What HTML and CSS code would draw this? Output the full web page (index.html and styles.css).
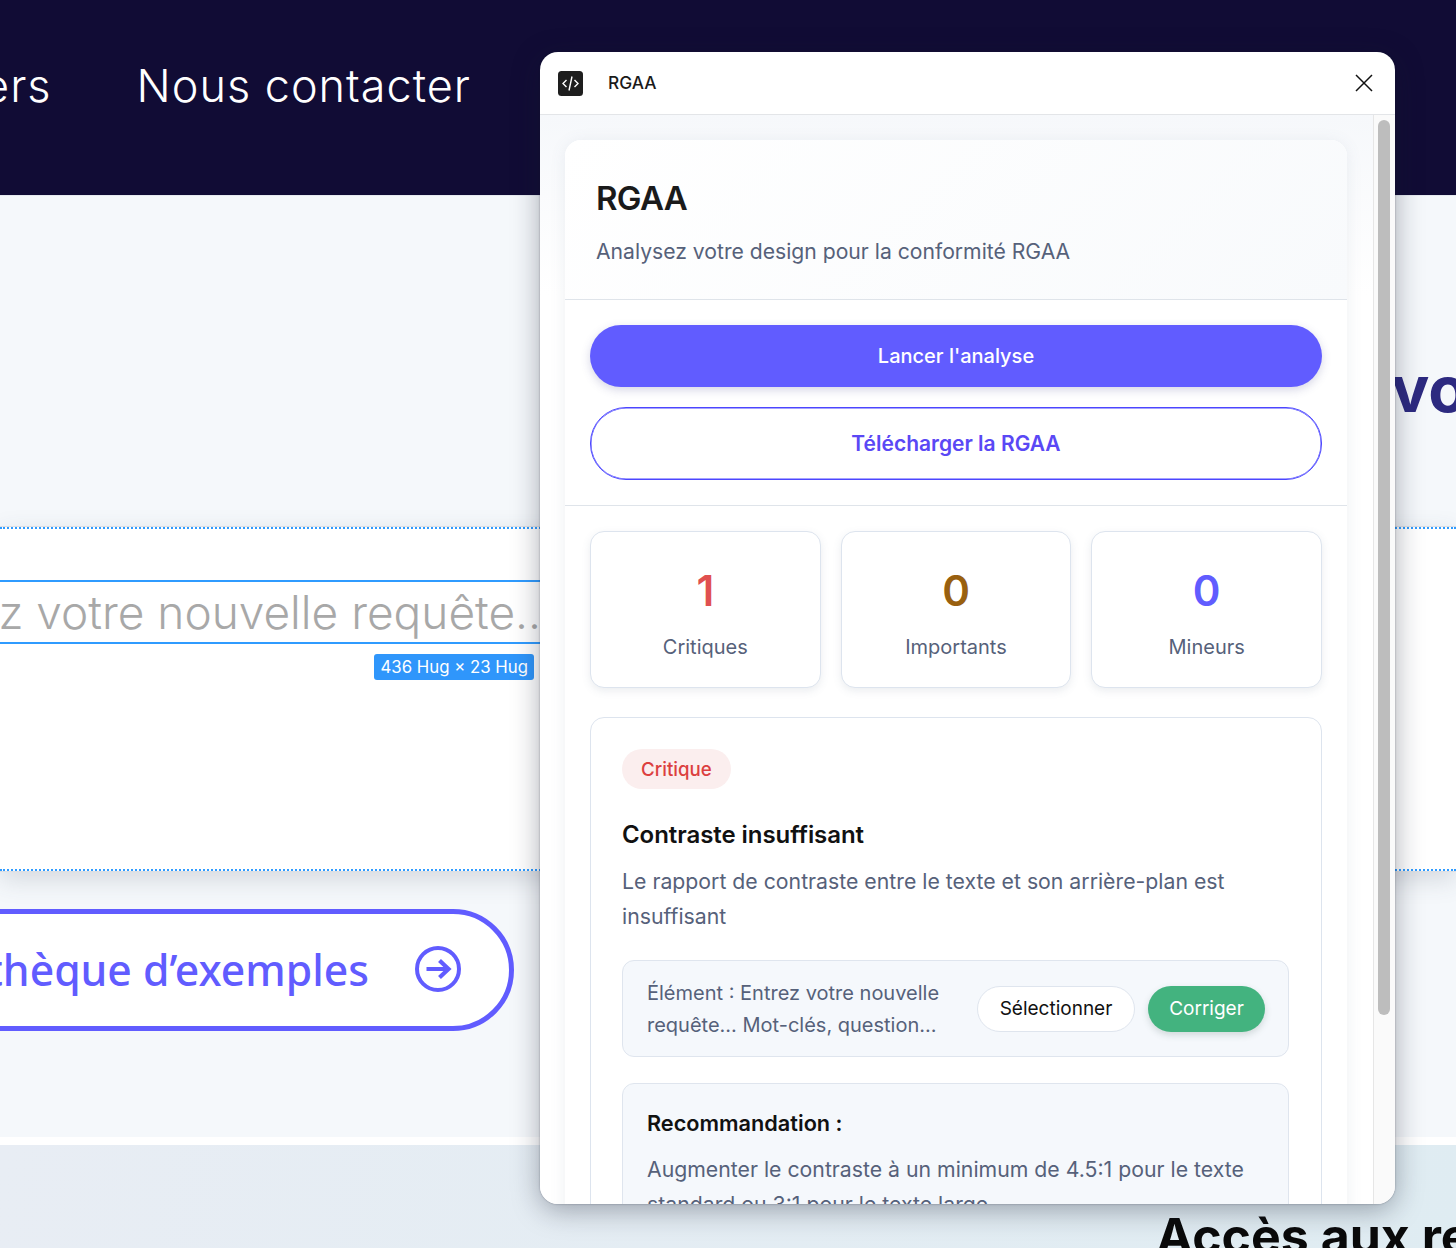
FILE: index.html
```html
<!DOCTYPE html>
<html lang="fr">
<head>
<meta charset="utf-8">
<title>RGAA</title>
<link rel="stylesheet" href="styles.css">
</head>
<body>
<div class="page">
  <header class="topbar">
    <span class="nav-link">ers</span>
    <span class="nav-link">Nous contacter</span>
  </header>
  <main class="hero">
    <h2 class="hero-title">vos</h2>
    <section class="prompt-band">
      <div class="prompt-frame"><span class="prompt-text">ez votre nouvelle requête...</span></div>
      <div class="size-row"><span class="size-tag">436 Hug × 23 Hug</span></div>
    </section>
    <div class="examples-row">
      <a class="examples-btn">
        <span>thèque d’exemples</span>
        <svg class="examples-icon" viewBox="0 0 46 46" fill="none" stroke="#615cff" stroke-width="4"><circle cx="23" cy="23" r="21"/><path d="M11.5 23H33M24.5 14.5 33.5 23l-9 8.500" stroke-width="4.200"/></svg>
      </a>
    </div>
  </main>
  <div class="strip"></div>
  <section class="resources"><h2 class="resources-title">Accès aux ressources</h2></section>

  <aside class="plugin">
    <div class="plugin-head">
      <span class="plugin-id">
        <svg class="plugin-logo" viewBox="0 0 25 25"><rect width="25" height="25" rx="3.500" fill="#1e1e1e"/><path d="M8.500 9 5 12.500 8.500 16M16.500 9 20 12.500 16.500 16M14 5.500 11 19.500" fill="none" stroke="#fff" stroke-width="1.400"/></svg>
        <span class="plugin-name">RGAA</span>
      </span>
      <svg class="plugin-close" viewBox="0 0 18 18" fill="none" stroke="#111" stroke-width="1.500"><path d="M1 1 17 17M17 1 1 17"/></svg>
    </div>
    <div class="plugin-main">
      <div class="plugin-scroll">
        <div class="sheet">
          <div class="sheet-head">
            <h1 class="sheet-title">RGAA</h1>
            <p class="sheet-sub">Analysez votre design pour la conformité RGAA</p>
          </div>
          <div class="actions">
            <button class="btn btn-primary">Lancer l'analyse</button>
            <button class="btn btn-outline">Télécharger la RGAA</button>
          </div>
          <div class="report">
            <div class="stats">
              <div class="stat"><span class="stat-num num-red">1</span><span class="stat-label">Critiques</span></div>
              <div class="stat"><span class="stat-num num-brown">0</span><span class="stat-label">Importants</span></div>
              <div class="stat"><span class="stat-num num-blue">0</span><span class="stat-label">Mineurs</span></div>
            </div>
            <article class="issue">
              <span class="badge">Critique</span>
              <h3 class="issue-title">Contraste insuffisant</h3>
              <p class="issue-text">Le rapport de contraste entre le texte et son arrière-plan est insuffisant</p>
              <div class="element">
                <p class="element-text">Élément : Entrez votre nouvelle requête... Mot-clés, question...</p>
                <button class="pill pill-select">Sélectionner</button>
                <button class="pill pill-fix">Corriger</button>
              </div>
              <div class="reco">
                <h4 class="reco-title">Recommandation :</h4>
                <p class="reco-text">Augmenter le contraste à un minimum de 4.5:1 pour le texte standard ou 3:1 pour le texte large</p>
              </div>
            </article>
          </div>
        </div>
      </div>
      <div class="scrolltrack"><div class="scrollthumb"></div></div>
    </div>
  </aside>
</div>
</body>
</html>
```
FILE: styles.css
```css
* { box-sizing: border-box; }
html, body { margin: 0; padding: 0; }
body { font-family: "Inter", "Liberation Sans", sans-serif; background: #f5f8fc; }
p, h1, h2, h3, h4 { margin: 0; }

.page {
  position: relative;
  width: 1456px;
  height: 1248px;
  overflow: hidden;
  display: flex;
  flex-direction: column;
}

.topbar {
  height: 196px;
  flex: none;
  background: #110c35;
  display: flex;
  justify-content: flex-end;
  align-items: flex-start;
  gap: 85px;
  padding: 58px 985px 0 0;
  border-bottom: 1px solid #e6eaf0;
}
.nav-link {
  color: #fff;
  font-family: "Inter", sans-serif;
  font-size: 45px;
  font-weight: 300;
  line-height: 56px;
  letter-spacing: 1px;
  white-space: nowrap;
}

.hero {
  height: 941px;
  flex: none;
  display: flex;
  flex-direction: column;
  background: #f5f8fb;
  overflow: hidden;
}
.hero-title {
  height: 331px;
  flex: none;
  padding: 155px 0 0 1391px;
  color: #2d2a80;
  font-size: 64px;
  font-weight: 700;
  line-height: 76px;
  white-space: nowrap;
}
.prompt-band {
  height: 344px;
  flex: none;
  background: #fff;
  border-top: 2px dotted #2f9bff;
  border-bottom: 2px dotted #2f9bff;
  box-shadow: 0 0 0 1px #dcdfe4, 0 8px 24px rgba(60, 70, 90, .18);
  padding-top: 51px;
}
.prompt-frame {
  width: 556px;
  height: 64px;
  border-top: 2px solid #2f9bff;
  border-bottom: 2px solid #2f9bff;
  display: flex;
  justify-content: flex-end;
  align-items: center;
}
.prompt-text {
  flex: none;
  margin-right: 2px;
  color: #a8a8a8;
  font-size: 46px;
  font-weight: 300;
  line-height: 60px;
  white-space: nowrap;
}
.size-row {
  display: flex;
  justify-content: flex-end;
  padding: 10px 922px 0 0;
}
.size-tag {
  background: #2f96fb;
  color: #fff;
  font-size: 16.800px;
  line-height: 26px;
  padding: 0 6px;
  border-radius: 3px;
  white-space: nowrap;
}
.examples-row {
  display: flex;
  justify-content: flex-end;
  padding: 38px 942px 0 0;
}
.examples-btn {
  display: flex;
  align-items: center;
  gap: 46px;
  width: 640px;
  flex: none;
  justify-content: flex-end;
  height: 122px;
  padding: 0 48px 2px 0;
  background: #fff;
  border: 5px solid #615cff;
  border-radius: 61px;
  color: #615cff;
  font-family: "Noto Sans", "Open Sans", sans-serif;
  font-size: 42.700px;
  font-weight: 500;
  white-space: nowrap;
}
.examples-icon { width: 46px; height: 46px; flex: none; }

.strip { height: 8px; flex: none; background: #fff; }
.resources {
  flex: 1;
  background: linear-gradient(100deg, #e8edf4, #dfecf2);
  padding: 63px 0 0 1156px;
  overflow: hidden;
}
.resources-title {
  color: #0a0a0a;
  font-size: 50px;
  font-weight: 700;
  line-height: 56px;
  white-space: nowrap;
}

.plugin {
  position: absolute;
  left: 540px;
  top: 52px;
  width: 855px;
  height: 1152px;
  background: #fff;
  border-radius: 18px;
  overflow: hidden;
  display: flex;
  flex-direction: column;
  box-shadow: 0 6px 28px rgba(20, 25, 45, .36), 0 0 2px rgba(20, 25, 45, .4);
}
.plugin-head {
  height: 63px;
  flex: none;
  display: flex;
  align-items: center;
  justify-content: space-between;
  padding: 0 22px 0 18px;
  border-bottom: 1px solid #e3e5e8;
}
.plugin-id { display: flex; align-items: center; gap: 25px; }
.plugin-logo { width: 25px; height: 25px; display: block; }
.plugin-name { font-size: 17.300px; font-weight: 500; color: #1a1a1a; margin-top: -1px; }
.plugin-close { width: 18px; height: 18px; display: block; }

.plugin-main { flex: 1; display: flex; min-height: 0; }
.plugin-scroll {
  flex: none;
  width: 833px;
  background: linear-gradient(180deg, #f6f8fb 0, #fff 180px);
  padding: 25px 26px 0 25px;
  overflow: hidden;
}
.scrolltrack {
  flex: 1;
  border-left: 1px solid #e6e6e6;
  background: #fafafa;
  padding: 5px 5px 0 4px;
}
.scrollthumb { height: 895px; background: #bdbdbd; border-radius: 6px; }

.sheet { background: #fff; border-radius: 16px 16px 0 0; box-shadow: 0 2px 16px rgba(90, 105, 135, .1); }
.sheet-head {
  height: 160px;
  padding: 37px 31px 0;
  border-bottom: 1px solid #dfe4ea;
  border-radius: 16px 16px 0 0;
  background: linear-gradient(135deg, #fff, #f8fafc);
}
.sheet-title { font-size: 33px; font-weight: 600; line-height: 42px; letter-spacing: -.7px; color: #1a1a1a; }
.sheet-sub { margin-top: 18px; font-size: 21.150px; line-height: 30px; color: #56617a; }

.actions {
  display: flex;
  flex-direction: column;
  gap: 20px;
  padding: 25px;
  border-bottom: 1px solid #dfe4ea;
}
.btn {
  display: block;
  width: 100%;
  font-family: inherit;
  font-weight: 500;
  border-radius: 36px;
}
.btn-primary { height: 62px; font-size: 20px; background: #615cff; color: #fff; border: 0; box-shadow: 0 3px 10px rgba(70, 70, 140, .22); }
.btn-outline { height: 73px; font-size: 21px; font-weight: 600; background: #fff; color: #5a48f5; border: 1px solid #4c46ff; box-shadow: inset 0 0 0 .5px #4c46ff; }

.report { padding: 25px 25px 0; }
.stats { display: grid; grid-template-columns: repeat(3, 1fr); gap: 20px; }
.stat {
  height: 157px;
  display: flex;
  flex-direction: column;
  align-items: center;
  padding-top: 32px;
  background: #fff;
  border: 1.500px solid #dde4ee;
  border-radius: 14px;
  box-shadow: 0 3px 8px rgba(90, 105, 135, .12);
}
.stat-num { font-size: 42px; font-weight: 600; line-height: 54px; }
.num-red { color: #e05050; }
.num-brown { color: #99600f; }
.num-blue { color: #615cff; }
.stat-label { margin-top: 16px; font-size: 20px; line-height: 26px; color: #56617a; }

.issue {
  margin-top: 29px;
  padding: 31px 32px 0 31px;
  height: 600px;
  border: 1.500px solid #dde4ee;
  border-radius: 14px;
  background: #fff;
}
.badge {
  display: inline-block;
  height: 40px;
  padding: 0 19px;
  border-radius: 20px;
  background: #fbeeee;
  color: #dc3f3f;
  font-size: 18.700px;
  font-weight: 500;
  line-height: 42px;
}
.issue-title { margin-top: 26px; font-size: 24px; font-weight: 600; line-height: 40px; letter-spacing: -.06px; color: #111; }
.issue-text { margin-top: 9px; font-size: 21.250px; line-height: 35px; color: #56617a; }
.element {
  margin-top: 26px;
  height: 97px;
  display: flex;
  align-items: center;
  gap: 13px;
  padding: 0 23px 0 24px;
  background: #f5f8fc;
  border: 1.500px solid #dfe5ee;
  border-radius: 12px;
}
.element-text { flex: 1; font-size: 20px; line-height: 32px; color: #56617a; }
.pill {
  flex: none;
  height: 46px;
  font-family: inherit;
  font-size: 19px;
  border-radius: 23px;
}
.pill-select { width: 158px; background: #fff; color: #111; border: 1.500px solid #dfe5ee; }
.pill-fix { width: 117px; background: #43b37f; color: #fff; border: 0; box-shadow: 0 3px 7px rgba(60, 90, 80, .2); }
.reco {
  margin-top: 26px;
  padding: 23px 24px 0;
  height: 200px;
  background: #f5f8fc;
  border: 1.500px solid #dfe5ee;
  border-radius: 12px;
}
.reco-title { font-size: 21.700px; font-weight: 600; line-height: 32px; color: #111; }
.reco-text { margin-top: 13px; font-size: 21.250px; line-height: 35px; color: #56617a; }
```
